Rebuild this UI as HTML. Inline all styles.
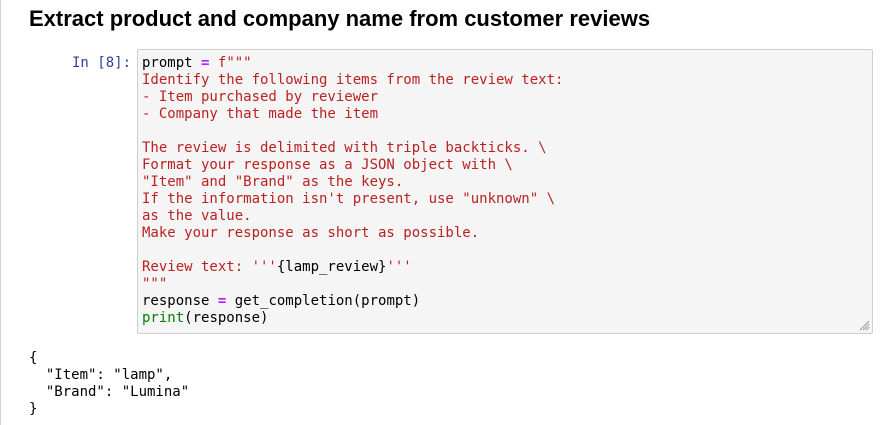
<!DOCTYPE html>
<html><head><style>
body{margin:0;background:#fff;width:889px;height:425px;overflow:hidden;position:relative;font-family:"Liberation Sans",sans-serif}
.lb{position:absolute;left:0;top:0;width:1px;height:425px;background:#d0d0d0}
h1{position:absolute;left:29px;top:6px;margin:0;font-size:22px;font-weight:bold;color:#000;white-space:nowrap}
.pr{position:absolute;left:72px;top:55px;font:14px/17px "DejaVu Sans Mono",monospace;color:#303f9f}
.box{position:absolute;left:137px;top:49px;width:734px;height:283px;background:#f5f5f5;border:1px solid #cfcfcf;border-radius:2px}
pre{margin:0;font:14px/17px "DejaVu Sans Mono",monospace;color:#000;white-space:pre}
.code{position:absolute;left:4px;top:5px}
.s{color:#ba2121}.o{color:#aa22ff;font-weight:bold}.g{color:#008000}
.out{position:absolute;left:29px;top:350px}
.rz{position:absolute;right:2px;bottom:2px}
</style></head><body>
<div class="lb"></div>
<h1>Extract product and company name from customer reviews</h1>
<div class="pr">In [8]:</div>
<div class="box"><pre class="code">prompt <span class="o">=</span> <span class="s">f"""
Identify the following items from the review text:
- Item purchased by reviewer
- Company that made the item

The review is delimited with triple backticks. \
Format your response as a JSON object with \
"Item" and "Brand" as the keys.
If the information isn't present, use "unknown" \
as the value.
Make your response as short as possible.

Review text: '''</span>{lamp_review}<span class="s">'''
"""</span>
response <span class="o">=</span> get_completion(prompt)
<span class="g">print</span>(response)</pre>
<svg class="rz" width="12" height="12"><path d="M11 2L2 11M11 5L5 11M11 8L8 11" stroke="#999" stroke-width="1"/></svg>
</div>
<pre class="out">{
  "Item": "lamp",
  "Brand": "Lumina"
}</pre>
</body></html>
